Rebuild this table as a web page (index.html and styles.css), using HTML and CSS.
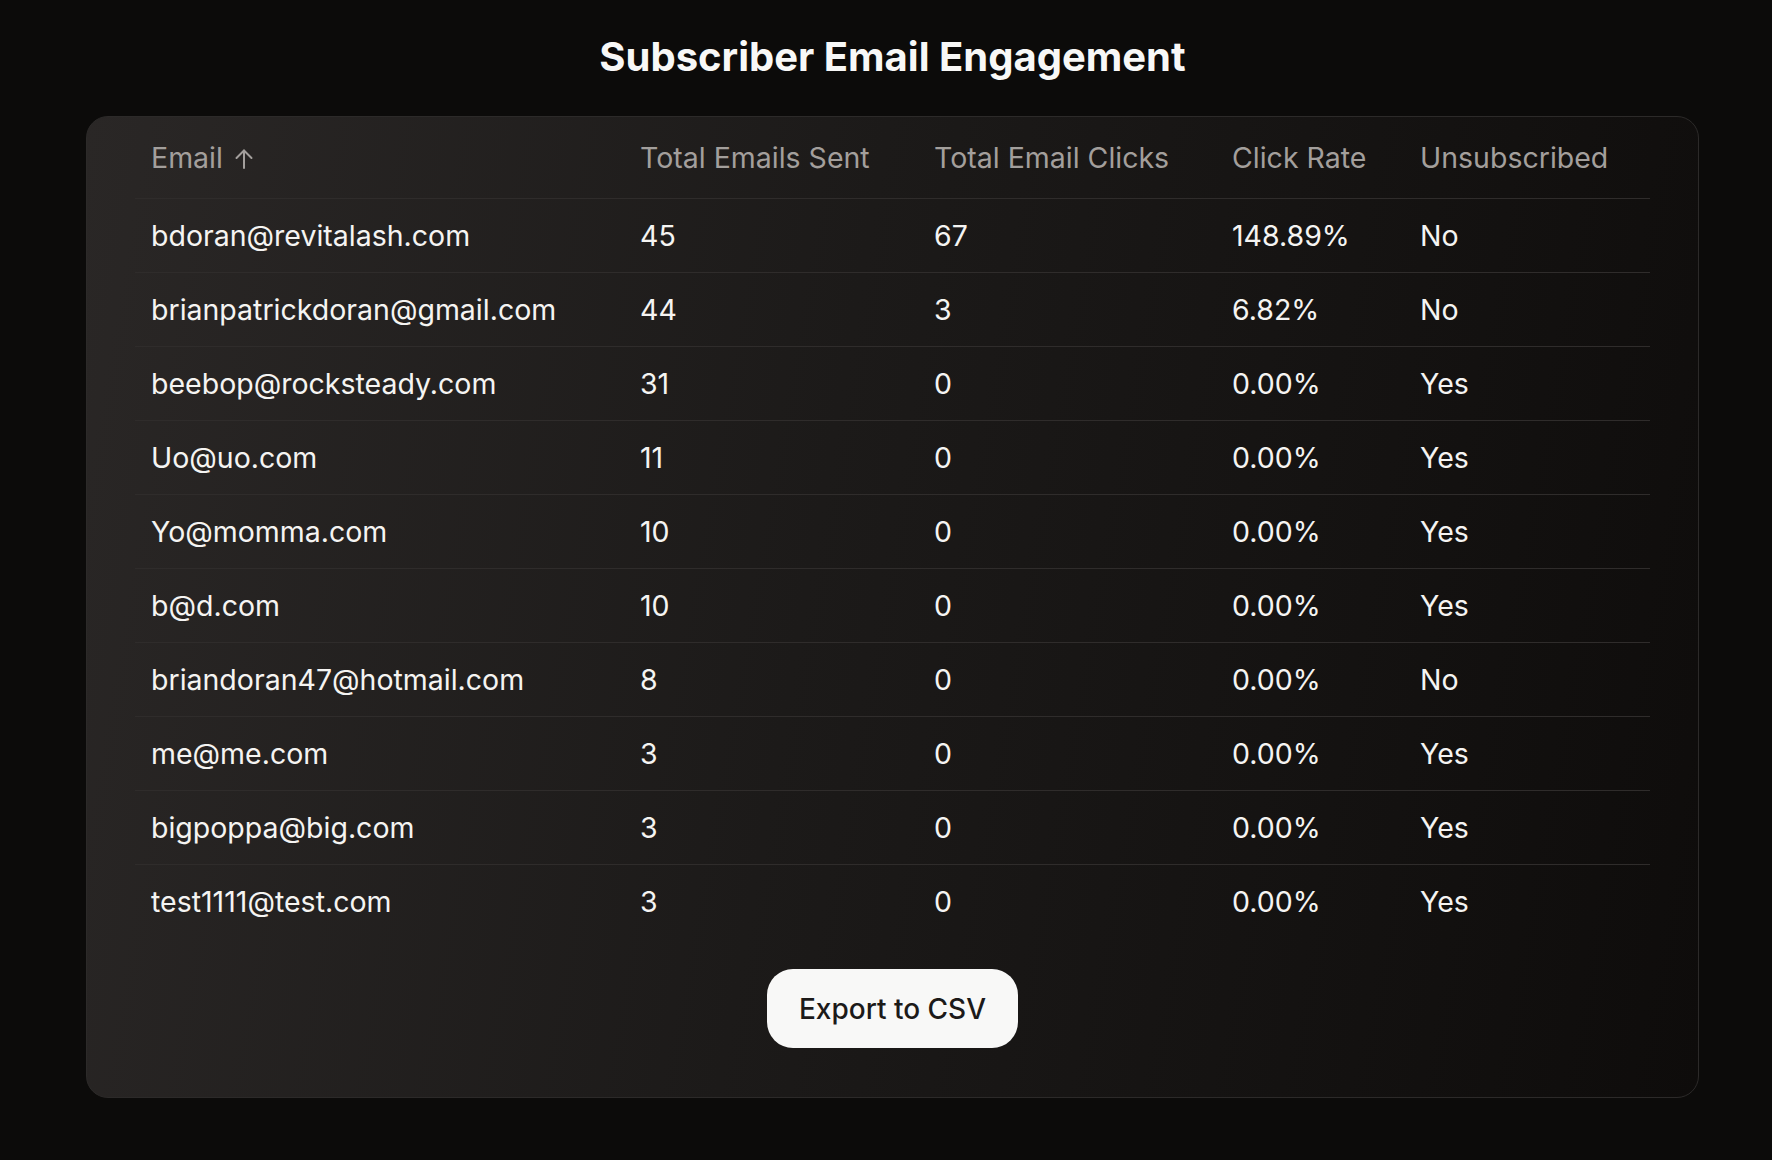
FILE: index.html
```html
<!DOCTYPE html>
<html lang="en">
<head>
<meta charset="utf-8">
<title>Subscriber Email Engagement</title>
<link rel="stylesheet" href="styles.css">
</head>
<body>
<main class="page">
  <h1 class="title">Subscriber Email Engagement</h1>
  <section class="card">
    <table class="table">
      <colgroup>
        <col class="c-email"><col class="c-sent"><col class="c-clicks"><col class="c-rate"><col class="c-unsub">
      </colgroup>
      <thead>
        <tr>
          <th>Email <svg class="sort" width="18" height="20" viewBox="0 0 18 20" fill="none" stroke="currentColor" stroke-width="2" stroke-linecap="round" stroke-linejoin="round"><path d="M9 19V1.5"/><path d="M1.5 9L9 1.5L16.5 9"/></svg></th>
          <th>Total Emails Sent</th>
          <th>Total Email Clicks</th>
          <th>Click Rate</th>
          <th>Unsubscribed</th>
        </tr>
      </thead>
      <tbody>
        <tr><td>bdoran@revitalash.com</td><td>45</td><td>67</td><td>148.89%</td><td>No</td></tr>
        <tr><td>brianpatrickdoran@gmail.com</td><td>44</td><td>3</td><td>6.82%</td><td>No</td></tr>
        <tr><td>beebop@rocksteady.com</td><td>31</td><td>0</td><td>0.00%</td><td>Yes</td></tr>
        <tr><td>Uo@uo.com</td><td>11</td><td>0</td><td>0.00%</td><td>Yes</td></tr>
        <tr><td>Yo@momma.com</td><td>10</td><td>0</td><td>0.00%</td><td>Yes</td></tr>
        <tr><td>b@d.com</td><td>10</td><td>0</td><td>0.00%</td><td>Yes</td></tr>
        <tr><td>briandoran47@hotmail.com</td><td>8</td><td>0</td><td>0.00%</td><td>No</td></tr>
        <tr><td>me@me.com</td><td>3</td><td>0</td><td>0.00%</td><td>Yes</td></tr>
        <tr><td>bigpoppa@big.com</td><td>3</td><td>0</td><td>0.00%</td><td>Yes</td></tr>
        <tr><td>test1111@test.com</td><td>3</td><td>0</td><td>0.00%</td><td>Yes</td></tr>
      </tbody>
    </table>
    <div class="actions">
      <button class="export" type="button">Export to CSV</button>
    </div>
  </section>
</main>
</body>
</html>
```

FILE: styles.css
```css
* { box-sizing: border-box; }

html, body {
  margin: 0;
  padding: 0;
  background: #0c0b0a;
}

body {
  font-family: Inter, "Noto Sans", sans-serif;
  color: #f5f4f2;
  min-height: 1160px;
}

.page {
  padding: 0 73px 0 86px;
  display: flex;
  flex-direction: column;
}

.title {
  margin: 0;
  padding-top: 32px;
  height: 116px;
  text-align: center;
  font-size: 40px;
  line-height: 49px;
  font-weight: 700;
  color: #f8f8f7;
}

.card {
  border: 1px solid #2c2a29;
  border-radius: 22px;
  background: linear-gradient(100deg, #2a2726 0%, #1c1a19 45%, #0e0c0b 100%);
  padding: 24px 48px 49px 48px;
}

.table {
  width: 100%;
  border-collapse: collapse;
  table-layout: fixed;
  font-size: 28.5px;
  line-height: 34px;
}

.c-email { width: 489px; }
.c-sent { width: 294px; }
.c-clicks { width: 298px; }
.c-rate { width: 188px; }
.c-unsub { width: 246px; }

.table th {
  text-align: left;
  font-weight: 400;
  color: #a39f9c;
  padding: 0 16px 23px 16px;
  border-bottom: 1px solid #2f2c2b;
  white-space: nowrap;
}

.sort {
  display: inline-block;
  vertical-align: -1px;
  margin-left: 4px;
  color: #a39f9c;
}

.table td {
  padding: 20px 16px 19px 16px;
  color: #f5f4f2;
  white-space: nowrap;
}

.table tbody tr + tr td {
  border-top: 1px solid #2f2c2b;
}

.actions {
  display: flex;
  justify-content: center;
  padding-top: 31px;
}

.export {
  font-family: Inter, "Noto Sans", sans-serif;
  font-size: 28px;
  font-weight: 500;
  line-height: 34px;
  color: #1c1a19;
  background: #f8f8f7;
  border: none;
  border-radius: 26px;
  width: 251px;
  height: 79px;
  padding: 0;
  cursor: pointer;
}
```
